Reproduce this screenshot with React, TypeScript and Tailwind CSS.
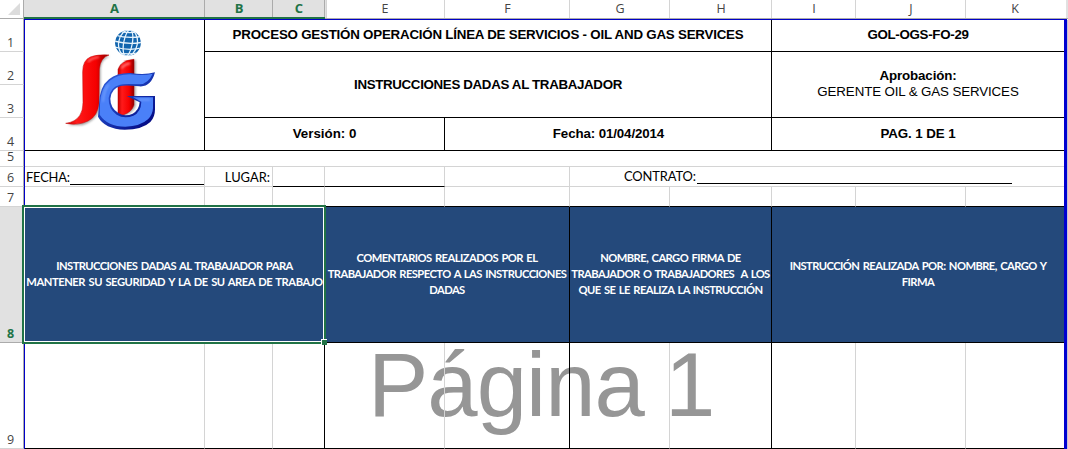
import type { ReactNode } from 'react';

const CALIBRI = "font-['Lato',sans-serif]";
const ARIAL = "font-['Liberation_Sans',Arial,sans-serif]";

function ColumnHeader({ label, selected = false, className = '' }: { label: string; selected?: boolean; className?: string }) {
  return (
    <div
      className={`flex justify-center leading-[17px] ${
        selected
          ? 'border-b-2 border-b-[#217346] bg-[#e1e1e1] text-[13px] font-bold text-[#217346] shadow-[inset_-1px_0_0_#ababab]'
          : 'border-b border-b-[#ababab] text-[12.5px] text-[#444]'
      } ${className}`}
    >
      {label}
    </div>
  );
}

const DIVIDER = 'shadow-[inset_-1px_0_0_#d4d4d4]';
const AFTER_HIDDEN = 'shadow-[inset_-1px_0_0_#d4d4d4,inset_1px_0_0_#e1e1e1,inset_2px_0_0_#d4d4d4]';

function RowHeader({ label, selected = false, className = 'pb-[1px]' }: { label: string; selected?: boolean; className?: string }) {
  return (
    <div
      className={`flex items-end justify-center border-r border-b border-r-[#ababab] pr-[2px] text-[12.5px] leading-[14px] ${
        selected ? 'border-b-[#ababab] bg-[#e1e1e1] font-bold text-[#217346]' : 'border-b-[#d4d4d4] text-[#444]'
      } ${className}`}
    >
      {label}
    </div>
  );
}

type CellProps = { className?: string; children?: ReactNode };

function Ruled({ className = '', children }: CellProps) {
  return (
    <div className={`flex items-center justify-center border-r border-b border-black text-center whitespace-nowrap ${className}`}>
      {children}
    </div>
  );
}

function Plain({ className = '', children }: CellProps) {
  return <div className={`border-r border-b border-[#d4d4d4] whitespace-nowrap ${className}`}>{children}</div>;
}

function Heading({ className = '', children }: CellProps) {
  return (
    <div
      className={`${CALIBRI} flex flex-col items-center justify-center border-r border-b border-black bg-[#24497b] pb-[2px] text-center text-[11.2px] leading-[16px] font-bold tracking-[-0.56px] [word-spacing:1.2px] whitespace-pre text-white ${className}`}
    >
      {children}
    </div>
  );
}

function Logo() {
  return (
    <svg className="mt-[5px] ml-[35px] block" width="100" height="110" viewBox="0 0 300 330">
      <defs>
        <linearGradient id="red" x1="0" x2="1" y1="0" y2="0">
          <stop offset="0" stopColor="#c40000" />
          <stop offset="0.25" stopColor="#ff1a1a" />
          <stop offset="0.7" stopColor="#f50000" />
          <stop offset="1" stopColor="#8c0000" />
        </linearGradient>
        <linearGradient id="edge" x1="0" x2="1" y1="0" y2="1">
          <stop offset="0" stopColor="#3563e0" />
          <stop offset="0.45" stopColor="#1a3bb8" />
          <stop offset="1" stopColor="#000078" />
        </linearGradient>
        <clipPath id="globe">
          <circle cx="204" cy="54" r="39" />
        </clipPath>
        <filter id="soft" x="-20%" y="-20%" width="140%" height="140%">
          <feGaussianBlur stdDeviation="3" />
        </filter>
      </defs>
      <g clipPath="url(#globe)">
        <circle cx="204" cy="54" r="39" fill="#1265ae" />
        <g fill="none" stroke="#e6f3fc" strokeWidth="3.8">
          <ellipse cx="204" cy="54" rx="13" ry="40" transform="rotate(10 204 54)" />
          <ellipse cx="204" cy="54" rx="28" ry="40" transform="rotate(10 204 54)" />
          <path d="M164 30Q204 42 246 34M162 48Q204 60 246 52M164 66Q204 78 246 69M170 82Q204 91 238 83M176 18Q204 27 234 20" />
        </g>
      </g>
      <path d="M149 94Q124 103 122 130L122 240Q115 286 66 301L24 301Q71 282 74 240V130Q78 93 149 94Z" fill="#777" filter="url(#soft)" opacity=".65" />
      <path d="M147 90Q121 98 118 132L117 235Q113 274 84 288Q54 303 17 295Q46 291 59 272Q69 258 69 232L68 140Q68 106 91 96Q112 88 147 90Z" fill="url(#red)" stroke="#c00000" strokeWidth="1.5" />
      <path d="M84 111Q94 99 117 96" fill="none" stroke="#ff7777" strokeWidth="5" filter="url(#soft)" />
      <path d="M180 145V133Q185 107 227 105V243Q220 263 192 273H180Z" fill="#777" filter="url(#soft)" opacity=".65" />
      <path d="M174 144V133Q181 107 222 103V240Q215 262 189 270H174Z" fill="url(#red)" stroke="#b80000" strokeWidth="1.5" />
      <path d="M185 130Q191 119 210 115" fill="none" stroke="#ff8a8a" strokeWidth="5" filter="url(#soft)" />
      <path
        d="M285 142Q254 151 211 144Q171 143 147 163Q118 185 117 239L114 275Q134 312 194 314Q247 314 271 291Q285 277 285 253V213H200L239 232Q237 256 218 266Q194 276 175 264Q151 249 151 221Q154 190 182 183Q195 180 238 184Q273 187 285 142Z"
        fill="url(#edge)"
      />
      <path
        d="M278 146Q250 153 211 148Q175 147 151 166Q121 189 120 238L119 269Q143 305 196 305Q241 304 264 283Q278 269 279 250V217H219L244 230Q243 261 220 272Q193 283 170 269Q145 252 146 219Q150 187 180 179Q193 175 239 178Q265 176 278 146Z"
        fill="#4a80f8"
      />
      <path d="M146 179Q131 197 129 230M270 224H235" fill="none" stroke="#7da7ff" strokeWidth="4" filter="url(#soft)" />
    </svg>
  );
}

export default function App() {
  return (
    <div className="relative h-[449px] w-[1068px] overflow-hidden bg-white font-['Open_Sans',sans-serif] text-black">
      <div
        className={`${ARIAL} pointer-events-none absolute top-[335px] left-[368px] text-[90.5px] leading-[100px] tracking-[-1px] [word-spacing:-3px] whitespace-nowrap text-[#969696]`}
      >
        Página 1
      </div>

      <div className="relative grid grid-cols-[24px_1px_180px_68px_52px_120px_125px_100px_102px_84px_110px_98px_3px_1px] grid-rows-[19px_1px_32px_33px_33px_33px_16px_20px_20px_136px_106px]">
        <div className="flex items-start justify-end border-r border-b border-[#ababab] pt-[3px] pr-[3px]">
          <svg width="12" height="12" viewBox="0 0 12 12">
            <path d="M12 0V12H0Z" fill="#dcdcdc" />
          </svg>
        </div>
        <ColumnHeader label="A" selected className="col-span-2" />
        <ColumnHeader label="B" selected />
        <ColumnHeader label="C" selected />
        <ColumnHeader label="E" className={AFTER_HIDDEN} />
        <ColumnHeader label="F" className={DIVIDER} />
        <ColumnHeader label="G" className={DIVIDER} />
        <ColumnHeader label="H" className={DIVIDER} />
        <ColumnHeader label="I" className={DIVIDER} />
        <ColumnHeader label="J" className={DIVIDER} />
        <ColumnHeader label="K" />
        <div className="col-span-2 border-b border-b-[#ababab] shadow-[inset_-2px_0_0_#e1e1e1]" />

        <div className="border-r border-[#ababab]" />
        <div className="col-span-12 bg-[#0000c8]" />
        <div />

        <div className="col-start-1 row-span-9 row-start-3 grid grid-rows-subgrid">
          <RowHeader label="1" />
          <RowHeader label="2" />
          <RowHeader label="3" />
          <RowHeader label="4" />
          <RowHeader label="5" className="pb-[2px]" />
          <RowHeader label="6" />
          <RowHeader label="7" />
          <RowHeader label="8" selected />
          <RowHeader label="9" />
        </div>
        <div className="col-start-2 row-span-9 row-start-3 bg-[#0000c8]" />
        <div className="col-start-13 row-span-9 row-start-3 bg-[#0000d0]" />
        <div className="col-start-14 row-span-9 row-start-3 bg-[#c4c4d4]" />

        <div className="col-start-3 row-span-4 row-start-3 border-r border-b border-black">
          <Logo />
        </div>
        <Ruled className={`${ARIAL} col-span-6 col-start-4 row-start-3 pb-[2px] text-[13.33px] font-bold tracking-[-0.22px]`}>
          PROCESO GESTIÓN OPERACIÓN LÍNEA DE SERVICIOS - OIL AND GAS SERVICES
        </Ruled>
        <Ruled className={`${ARIAL} col-span-3 col-start-10 row-start-3 border-r-0 pb-[2px] text-[13.33px] font-bold tracking-[-0.3px]`}>
          GOL-OGS-FO-29
        </Ruled>
        <Ruled className={`${ARIAL} col-span-6 col-start-4 row-span-2 row-start-4 text-[13.33px] font-bold tracking-[-0.34px]`}>
          INSTRUCCIONES DADAS AL TRABAJADOR
        </Ruled>
        <Ruled className={`${ARIAL} col-span-3 col-start-10 row-span-2 row-start-4 flex-col border-r-0 pb-[1px] text-[13.33px] leading-[16px] tracking-[-0.12px]`}>
          <b>Aprobación:</b>
          <span>GERENTE OIL &amp; GAS SERVICES</span>
        </Ruled>
        <Ruled className={`${ARIAL} col-span-3 col-start-4 row-start-6 text-[13.33px] font-bold`}>Versión: 0</Ruled>
        <Ruled className={`${ARIAL} col-span-3 col-start-7 row-start-6 pl-[1px] text-[13.33px] font-bold tracking-[-0.12px]`}>Fecha: 01/04/2014</Ruled>
        <Ruled className={`${ARIAL} col-span-3 col-start-10 row-start-6 border-r-0 text-[13.33px] font-bold tracking-[-0.1px]`}>PAG. 1 DE 1</Ruled>

        <Plain className="col-span-10 col-start-3 row-start-7 border-r-0" />

        <Plain className={`${CALIBRI} col-start-3 row-start-8 flex pl-[1px] text-[12.9px] leading-[20px] tracking-[-0.2px]`}>
          <span className="w-[44px]">FECHA:</span>
          <span className="mb-[1px] flex-1 border-b border-black" />
        </Plain>
        <Plain className={`${CALIBRI} col-start-4 row-start-8 pr-[2px] text-right text-[12.9px] leading-[20px]`}>LUGAR:</Plain>
        <Plain className="col-start-5 row-start-8 border-b-black" />
        <Plain className="col-start-6 row-start-8 border-b-black" />
        <Plain className="col-start-7 row-start-8" />
        <Plain className={`${CALIBRI} col-span-5 col-start-8 row-start-8 flex border-r-0 pl-[54px] text-[12.9px] leading-[18px] tracking-[-0.1px]`}>
          <span className="w-[73px]">CONTRATO:</span>
          <span className="mb-[2px] w-[315px] border-b border-black" />
        </Plain>

        <Plain className="col-start-3 row-start-9 border-b-black" />
        <Plain className="col-start-4 row-start-9 border-b-black" />
        <Plain className="col-start-5 row-start-9 border-b-black" />
        <Plain className="col-start-6 row-start-9 border-b-black" />
        <Plain className="col-start-7 row-start-9 border-b-black" />
        <Plain className="col-start-8 row-start-9 border-b-black" />
        <Plain className="col-start-9 row-start-9 border-b-black" />
        <Plain className="col-start-10 row-start-9 border-b-black" />
        <Plain className="col-start-11 row-start-9 border-b-black" />
        <Plain className="col-start-12 row-start-9 border-r-0 border-b-black" />

        <Heading className="col-span-3 col-start-3 row-start-10">
          <span>INSTRUCCIONES DADAS AL TRABAJADOR PARA</span>
          <span className="tracking-[-0.46px]">MANTENER SU SEGURIDAD Y LA DE SU AREA DE TRABAJO</span>
        </Heading>
        <Heading className="col-span-2 col-start-6 row-start-10">
          <span>COMENTARIOS REALIZADOS POR EL</span>
          <span>TRABAJADOR RESPECTO A LAS INSTRUCCIONES</span>
          <span>DADAS</span>
        </Heading>
        <Heading className="col-span-2 col-start-8 row-start-10">
          <span>NOMBRE, CARGO FIRMA DE</span>
          <span>{'TRABAJADOR O TRABAJADORES  A LOS'}</span>
          <span>QUE SE LE REALIZA LA INSTRUCCIÓN</span>
        </Heading>
        <Heading className="col-span-3 col-start-10 row-start-10 border-r-0">
          <span>INSTRUCCIÓN REALIZADA POR: NOMBRE, CARGO Y</span>
          <span>FIRMA</span>
        </Heading>

        <Plain className="col-start-3 row-start-11 border-b-black" />
        <Plain className="col-start-4 row-start-11 border-b-black" />
        <Plain className="col-start-5 row-start-11 border-r-black border-b-black" />
        <Plain className="col-start-6 row-start-11 border-b-black" />
        <Plain className="col-start-7 row-start-11 border-r-black border-b-black" />
        <Plain className="col-start-8 row-start-11 border-b-black" />
        <Plain className="col-start-9 row-start-11 border-r-black border-b-black" />
        <Plain className="col-start-10 row-start-11 border-b-black" />
        <Plain className="col-start-11 row-start-11 border-b-black" />
        <Plain className="col-start-12 row-start-11 border-r-0 border-b-black" />
      </div>

      <div className="pointer-events-none absolute top-[205px] left-[22px] h-[139px] w-[304px] border-2 border-[#217346]">
        <div className="h-full w-full border border-white" />
        <div className="absolute -right-[3px] -bottom-[3px] h-[6px] w-[6px] border-t border-l border-white bg-[#217346]" />
      </div>
    </div>
  );
}
